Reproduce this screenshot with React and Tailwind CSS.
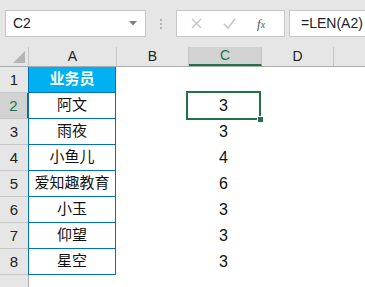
import React from 'react';

const FONT = { fontFamily: '"Liberation Sans", "Noto Sans CJK SC", sans-serif' };

const names = ['阿文', '雨夜', '小鱼儿', '爱知趣教育', '小玉', '仰望', '星空'];
const lens = [3, 3, 4, 6, 3, 3, 3];

const COLS = [
  { key: 'A', w: 'w-[88px]' },
  { key: 'B', w: 'w-[72px]' },
  { key: 'C', w: 'w-[73px]' },
  { key: 'D', w: 'w-[72px]' },
];

function Toolbar() {
  return (
    <div className="h-[47px] bg-[#e6e6e6] flex items-start pt-[10px] pl-[5px]">
      <div className="w-[141px] h-[27px] bg-white border border-[#c6c6c6] flex items-center justify-between pl-[7px] pr-[8px]">
        <span className="text-[14px] text-[#222]">C2</span>
        <svg width="8" height="5" viewBox="0 0 8 5"><path d="M0 0h8L4 4.5z" fill="#808080" /></svg>
      </div>
      <div className="w-[30px] h-[27px] flex flex-col items-center justify-center gap-[2px]">
        <span className="w-[2px] h-[2px] bg-[#b0b0b0]" />
        <span className="w-[2px] h-[2px] bg-[#b0b0b0]" />
        <span className="w-[2px] h-[2px] bg-[#b0b0b0]" />
      </div>
      <div className="w-[109px] h-[27px] bg-white border border-[#c6c6c6] flex items-center pl-[14px]">
        <svg width="11" height="11" viewBox="0 0 11 11">
          <path d="M1 1l9 9M10 1l-9 9" stroke="#c4c4c4" strokeWidth="1.4" />
        </svg>
        <svg className="ml-[21px]" width="13" height="11" viewBox="0 0 13 11">
          <path d="M1 6l4 4 7-9" stroke="#c4c4c4" strokeWidth="1.6" fill="none" />
        </svg>
        <span className="ml-[21px] italic text-[13px] text-[#555]" style={{ fontFamily: '"Liberation Serif", serif' }}>
          f<span className="text-[10px]">x</span>
        </span>
      </div>
      <div className="ml-[4px] flex-1 h-[27px] bg-white border border-[#c6c6c6] border-r-0 flex items-center pl-[11px]">
        <span className="text-[14px] text-[#222]">=LEN(A2)</span>
      </div>
    </div>
  );
}

function ColHeader() {
  return (
    <div className="flex h-[20px] bg-[#e6e6e6] border-b border-[#ababab]">
      <div className="w-[29px] border-r border-[#c6c6c6] relative">
        <svg className="absolute right-[3px] bottom-[3px]" width="12" height="12" viewBox="0 0 12 12">
          <path d="M12 0v12H0z" fill="#b5b5b5" />
        </svg>
      </div>
      {COLS.map((c) => (
        <div
          key={c.key}
          className={`${c.w} flex items-center justify-center text-[14px] ${
            c.key === 'C'
              ? 'bg-[#d2d2d2] text-[#217346] border-b-2 border-b-[#217346] border-r border-r-[#c6c6c6]'
              : 'text-[#222] border-r border-[#c6c6c6]'
          }`}
        >
          {c.key}
        </div>
      ))}
      <div className="flex-1" />
    </div>
  );
}

function Row({ n, a, c, head }) {
  const sel = n === 2;
  return (
    <div className={`flex h-[26px] relative ${sel ? 'z-10' : ''}`}>
      <div
        className={`w-[29px] flex items-end justify-center pb-[1px] text-[15px] border-b border-[#c6c6c6] ${
          sel
            ? 'bg-[#d2d2d2] text-[#217346] border-r-2 border-r-[#217346]'
            : 'bg-[#e6e6e6] text-[#222] border-r border-r-[#ababab]'
        }`}
      >
        {n}
      </div>
      <div
        className={`w-[88px] -ml-px flex items-center justify-center text-[15px] border-x border-b border-[#0070c0] ${
          head ? 'bg-[#00b0f0] text-white font-bold' : 'bg-white text-[#111]'
        }`}
      >
        {a}
      </div>
      <div className="w-[71px] bg-white" />
      <div className="w-[73px] bg-white relative flex items-center justify-center text-[16px] text-[#111]">
        {c}
        {sel && (
          <>
            <div className="absolute -left-px -top-[2px] -right-[1px] -bottom-[1px] border-2 border-[#217346]" />
            <div className="absolute -right-[4px] -bottom-[4px] w-[7px] h-[7px] bg-[#217346] border border-white" />
          </>
        )}
      </div>
      <div className="flex-1 bg-white" />
    </div>
  );
}

export default function App() {
  return (
    <div className="w-[365px] h-[287px] overflow-hidden bg-white" style={FONT}>
      <Toolbar />
      <ColHeader />
      <Row n={1} a="业务员" head />
      {names.map((nm, i) => (
        <Row key={i} n={i + 2} a={nm} c={lens[i]} />
      ))}
      <div className="flex h-[13px]">
        <div className="w-[29px] bg-[#e6e6e6] border-r border-[#ababab]" />
        <div className="flex-1 bg-white" />
      </div>
    </div>
  );
}
